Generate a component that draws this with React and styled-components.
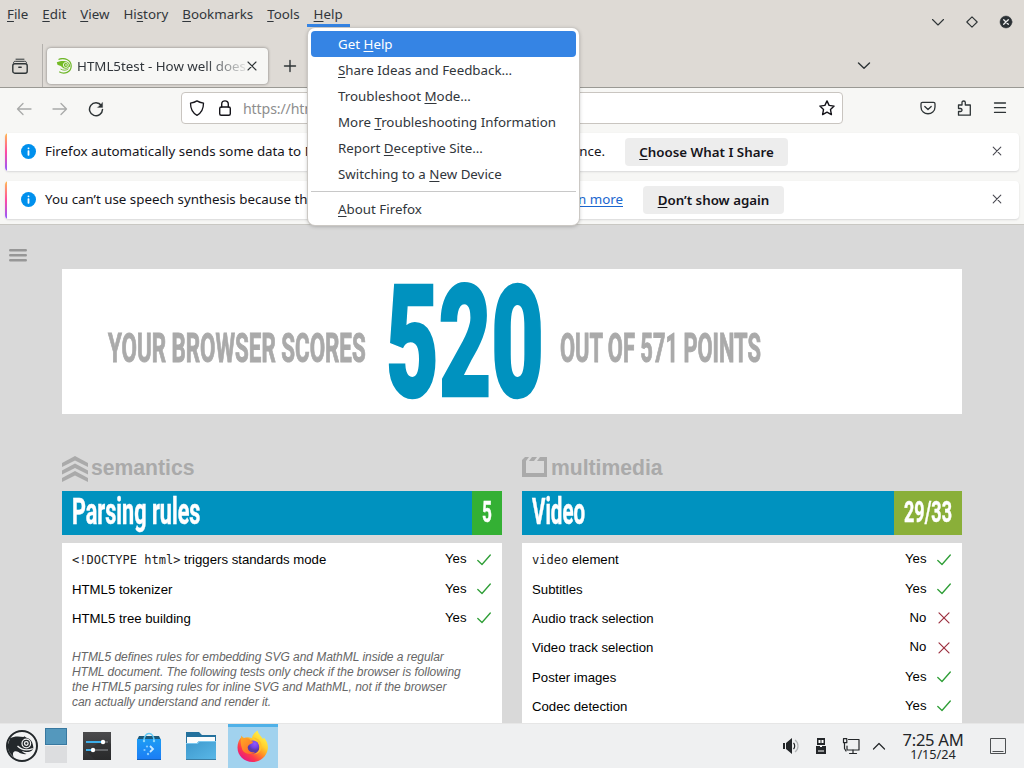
import React from "react";
import styled, { createGlobalStyle, css } from "styled-components";

const Global = createGlobalStyle`
  * { box-sizing: border-box; }
  body { margin: 0; overflow: hidden; font-family: "Noto Sans", sans-serif; }
  svg { display: block; flex: none; }
`;

const Desktop = styled.div`
  width: 1024px;
  height: 768px;
  display: flex;
  flex-direction: column;
  overflow: hidden;
  position: relative;
  background: #d9d9d9;
  font-size: 13.33px;
  color: #31363b;
`;

/* ---------- window chrome ---------- */
const Chrome = styled.header`
  height: 88px;
  flex: none;
  display: flex;
  justify-content: space-between;
  background: #dedad5;
  border-bottom: 1px solid #9a9994;
`;
const ChromeLeft = styled.div`
  display: flex;
  flex-direction: column;
`;
const MenuBar = styled.nav`
  display: flex;
  height: 27px;
`;
const MenuTitle = styled.span`
  padding: 0 7px;
  height: 27px;
  line-height: 28px;
  border-bottom: 3px solid ${(p) => (p.$open ? "#3584e4" : "transparent")};
`;
const Key = styled.span`
  text-decoration: underline;
  text-underline-offset: 2px;
  text-decoration-thickness: 1px;
  text-decoration-skip-ink: none;
`;
const TabStrip = styled.div`
  display: flex;
  align-items: center;
  height: 43px;
  margin-top: 17px;
`;
const ViewButton = styled.div`
  width: 43px;
  height: 43px;
  padding: 0 0 0 12px;
  display: flex;
  align-items: center;
  border-right: 1px solid #b3b0ac;
`;
const Tab = styled.div`
  width: 221px;
  height: 36px;
  margin-left: 4px;
  padding: 0 10px 0 9px;
  display: flex;
  align-items: center;
  background: #f7f7f5;
  border-radius: 4px;
  box-shadow: 0 0 3px rgba(0, 0, 0, 0.45);
`;
const TabTitle = styled.span`
  width: 170px;
  margin-left: 5px;
  overflow: hidden;
  white-space: nowrap;
  mask-image: linear-gradient(to right, #000 128px, transparent 174px);
`;
const NewTab = styled.div`
  margin-left: 15px;
`;
const WindowSide = styled.div`
  width: 170px;
  padding: 14px 10px 0 0;
  display: flex;
  flex-direction: column;
  gap: 27px;
`;
const WindowButtons = styled.div`
  display: flex;
  justify-content: flex-end;
  gap: 18px;
`;

/* ---------- toolbar ---------- */
const Toolbar = styled.div`
  height: 45px;
  flex: none;
  display: flex;
  align-items: flex-start;
  padding: 4px 16px 0;
  background: #f7f7f5;
`;
const NavButtons = styled.div`
  display: flex;
  gap: 20px;
  height: 33px;
  align-items: center;
  width: 165px;
`;
const AddressBar = styled.div`
  width: 662px;
  height: 32px;
  padding: 0 7px;
  display: flex;
  align-items: center;
  gap: 12px;
  background: #fff;
  border: 1px solid #c9c5c0;
  border-radius: 4px;
`;
const Address = styled.span`
  flex: 1;
  margin-left: -2px;
  font-size: 14.2px;
  letter-spacing: -0.15px;
  color: #8e8e8e;
`;
const ToolButtons = styled.div`
  margin-left: auto;
  height: 32px;
  display: flex;
  align-items: center;
  gap: 20px;
`;

/* ---------- notification bars ---------- */
const Notices = styled.div`
  height: 92px;
  flex: none;
  padding: 0 5px;
  display: flex;
  flex-direction: column;
  gap: 10px;
  background: #f7f7f5;
  border-bottom: 1px solid #c9c8c3;
`;
const Notice = styled.div`
  height: 38px;
  display: flex;
  align-items: center;
  background: #fff;
  border-radius: 4px;
  overflow: hidden;
  box-shadow: 0 1px 2px rgba(58, 57, 68, 0.16);
  color: #15141a;
`;
const NoticeAccent = styled.i`
  width: 2px;
  height: 38px;
  margin-right: 14px;
  background: linear-gradient(#ffbd4f, #ff4aa2 50%, #9059ff);
`;
const NoticeText = styled.span`
  width: ${(p) => p.$width}px;
  margin-left: 9px;
  white-space: nowrap;
  display: flex;
  justify-content: space-between;
  line-height: 18px;
  padding-bottom: 3px;
`;
const Link = styled.a`
  color: #1a66cf;
  text-decoration: underline;
  text-underline-offset: 2px;
`;
const NoticeButton = styled.span`
  margin-left: 20px;
  width: ${(p) => p.$width}px;
  height: 28px;
  line-height: 28px;
  border-radius: 4px;
  background: #ededed;
  text-align: center;
  font-weight: 600;
`;
const NoticeClose = styled.span`
  margin: -3px 17px 0 auto;
`;

/* ---------- help menu ---------- */
const Menu = styled.div`
  position: absolute;
  left: 308px;
  top: 28px;
  width: 271px;
  height: 197px;
  padding: 3px;
  background: #fff;
  border-radius: 7px;
  box-shadow: 0 0 0 1px #cbc8c4, 0 1px 4px rgba(0, 0, 0, 0.3);
`;
const MenuItem = styled.div`
  height: 26px;
  line-height: 26px;
  padding-left: 27px;
  border-radius: 4px;
  white-space: nowrap;
  ${(p) =>
    p.$active &&
    css`
      background: #3584e4;
      color: #fff;
    `}
`;
const MenuRule = styled.hr`
  margin: 4px 0;
  border: 0;
  border-top: 1px solid #c8c8c8;
`;

/* ---------- page ---------- */
const Page = styled.main`
  height: 499px;
  flex: none;
  display: flex;
  overflow: hidden;
  font-family: "Liberation Sans", Arial, sans-serif;
  font-size: 13.2px;
  color: #000;
`;
const PageSide = styled.div`
  width: 62px;
  padding: 23px 0 0 9px;
`;
const PageBody = styled.div`
  width: 900px;
  padding-top: 44px;
`;
const ScorePanel = styled.section`
  height: 145px;
  background: #fff;
  display: flex;
  padding-left: 46px;
`;
const Narrow = styled.span`
  display: block;
  width: ${(p) => p.$width}px;
  white-space: nowrap;
  font-family: Roboto, sans-serif;
  font-weight: ${(p) => p.$weight || 700};
  -webkit-text-stroke: ${(p) => p.$stroke || 0.5}px currentColor;
  transform-origin: 0 50%;
  transform: scaleX(${(p) => p.$scale});
`;
const ScoreWords = styled(Narrow)`
  font-size: 41px;
  line-height: 158px;
  color: #aaa;
`;
const ScoreValue = styled(Narrow)`
  font-size: 155px;
  line-height: 149px;
  color: #0092bf;
`;
const Columns = styled.div`
  display: flex;
  gap: 20px;
  margin-top: 41px;
`;
const Column = styled.section`
  width: 440px;
`;
const Category = styled.h2`
  margin: 0;
  height: 36px;
  padding-top: 2px;
  display: flex;
  align-items: flex-start;
  gap: 3px;
  font-size: 21.15px;
  line-height: 21px;
  color: #aaa;
`;
const CategoryIcon = styled.svg`
  margin-top: ${(p) => p.$shift || 0}px;
`;
const GroupHead = styled.div`
  height: 44px;
  display: flex;
  background: #0092bf;
  color: #fff;
`;
const GroupTitle = styled.div`
  flex: 1;
  padding-left: 10px;
  font-size: 36px;
  line-height: 42px;
`;
const GroupScore = styled.div`
  width: ${(p) => p.$width}px;
  padding-left: 10px;
  background: ${(p) => p.$color};
  font-size: 30px;
  line-height: 42px;
`;
const Card = styled.div`
  margin-top: 8px;
  padding: 2px 10px 0;
  height: 200px;
  background: #fff;
`;
const TestRow = styled.div`
  height: 29.33px;
  display: flex;
  align-items: center;
`;
const TestName = styled.span`
  flex: 1;
  padding-top: 0.6px;
`;
const Verdict = styled.span`
  width: 32px;
  margin-top: -1.4px;
`;
const NoLabel = styled.span`
  margin-left: 4.5px;
`;
const Code = styled.code`
  font-family: "DejaVu Sans Mono", monospace;
  font-size: 12px;
  line-height: 12px;
  color: #222;
`;
const Note = styled.p`
  margin: 17px 0 0;
  width: 393px;
  font-size: 12px;
  line-height: 15px;
  letter-spacing: -0.045px;
  font-style: italic;
  color: #666;
`;

/* ---------- taskbar ---------- */
const Taskbar = styled.footer`
  height: 45px;
  margin-top: -1px;
  flex: none;
  display: flex;
  justify-content: space-between;
  background: #eff0f1;
  border-top: 1px solid #e6e6e6;
  position: relative;
`;
const Group = styled.div`
  display: flex;
  height: 44px;
`;
const Launcher = styled.div`
  width: 45px;
  padding: 6px 0 0 6px;
`;
const Pager = styled.div`
  width: 26px;
  padding: 4px 2px 0 0;
  display: flex;
  flex-direction: column;
  gap: 1px;
`;
const PagerDesk = styled.i`
  width: 22px;
  height: 17px;
  background: ${(p) => (p.$current ? "#5498bd" : "#dcdddf")};
  border: 1px solid ${(p) => (p.$current ? "#3878a0" : "#dcdddf")};
`;
const Task = styled.div`
  width: ${(p) => (p.$active ? 50 : 52)}px;
  display: flex;
  align-items: center;
  justify-content: center;
  ${(p) =>
    p.$active &&
    css`
      margin-left: 1px;
      padding: 0 2px 4px 0;
      background: #a1d2ee;
      border-top: 3px solid #4fb1e8;
    `}
`;
const Tray = styled.div`
  display: flex;
  align-items: center;
  width: 242px;
`;
const TrayIcon = styled.div`
  width: ${(p) => p.$width}px;
`;
const Clock = styled.div`
  width: 66px;
  text-align: center;
  white-space: nowrap;
  color: #232629;
`;
const Time = styled.div`
  font-size: 16.6px;
  line-height: 17px;
  letter-spacing: -0.3px;
`;
const DateLine = styled.div`
  font-size: 12.7px;
  line-height: 13px;
`;
const ShowDesktop = styled.div`
  margin-left: 24px;
`;

/* ---------- drawings ---------- */
const Line = ({ w = 16, h = 16, d, color = "#2e3436", sw = 1.5, children }) => (
  <svg width={w} height={h} viewBox={`0 0 ${w} ${h}`} fill="none" stroke={color} strokeWidth={sw} strokeLinecap="round" strokeLinejoin="round">
    {d && <path d={d} />}
    {children}
  </svg>
);

const CloseIcon = ({ color = "#4a4a52" }) => <Line w={10} h={10} sw={1.1} color={color} d="M1.200 1.200l7.600 7.600M8.800 1.200l-7.600 7.600" />;

const InfoIcon = () => (
  <svg width="15" height="16" viewBox="0 0 15 16">
    <circle cx="7.5" cy="7.5" r="7.5" fill="#0090ed" />
    <rect x="6.6" y="3.4" width="1.8" height="1.8" rx=".7" fill="#fff" />
    <rect x="6.6" y="6.3" width="1.8" height="5.4" rx=".7" fill="#fff" />
  </svg>
);

const Favicon = () => (
  <svg width="16" height="16" viewBox="0 0 16 16" fill="none" stroke="#6fb72a">
    <path d="M2.500 1.500C8-1 15.200 2 15.200 8c0 6.200-7 8.800-12 5.800" strokeWidth="1.200" />
    <path d="M.8 4.300C4 3 7 2.900 9.500 3.300c3.200.5 5 2.800 4.600 5.600-1-1-1.500 1.600-4.300 1.800C6 10.900 6.500 8 3.300 7.600L1.500 6.800z" fill="#73ba25" stroke="none" />
    <circle cx="9.800" cy="7" r="2.500" fill="#73ba25" stroke="#f4faee" strokeWidth=".9" />
    <circle cx="10" cy="7" r=".8" fill="#fff" stroke="none" />
    <path d="M4.500 11c3 1.800 6 1.500 8-.3" strokeWidth=".9" />
  </svg>
);

const Chameleon = () => (
  <svg width="32" height="32" viewBox="0 0 32 32">
    <circle cx="16" cy="16" r="15" fill="#f3f4f4" stroke="#23282b" strokeWidth="2" />
    <path d="M4 8.300C8 6 13 6.300 17.500 7l.8-.8 2.200 1.500C25 9 26.800 12 27.300 17c.3 3.600-3 5.200-7 5-1.800-.1-3.300-.6-4.400-1.300 1 1.700 2.600 2.700 4.900 3.400-3.500.3-6.500-.4-8.300-2-2-1.200-4.200-1.200-5.200.4-.6 1.300-.4 3 .4 4.500C4 24 1.500 20 1.800 15z" fill="#23282b" />
    <circle cx="20.300" cy="13.500" r="4.300" fill="#23282b" stroke="#f3f4f4" strokeWidth="1.200" />
    <circle cx="20.300" cy="13.500" r="1.800" fill="none" stroke="#f3f4f4" strokeWidth="1.300" />
    <path d="M11.500 16c4 4 10 4.600 15.300 2.600" fill="none" stroke="#f3f4f4" strokeWidth="1.300" />
  </svg>
);

const SettingsApp = () => (
  <svg width="28" height="28" viewBox="0 0 28 28">
    <defs><linearGradient id="st" y2="1" x2="0"><stop stopColor="#4b4b4d" /><stop offset="1" stopColor="#2e2f31" /></linearGradient></defs>
    <rect width="28" height="28" fill="url(#st)" />
    <path d="M3 19l9 9h16V12l-3-3-5-1z" fill="#222" opacity=".35" />
    <path d="M3 10h17M3 18h7" stroke="#3daee9" strokeWidth="2" />
    <path d="M22 10h3M12 18h13" stroke="#626467" strokeWidth="2" />
    <circle cx="20" cy="10" r="2.200" fill="#fff" /><circle cx="10" cy="18" r="2.200" fill="#fff" />
  </svg>
);

const StoreApp = () => (
  <svg width="26" height="28" viewBox="0 0 26 28">
    <defs><linearGradient id="sb" x2="0" y2="1"><stop stopColor="#1d9cf4" /><stop offset="1" stopColor="#1b7df5" /></linearGradient></defs>
    <path d="M3 4h20l2 4H1z" fill="#1d5979" />
    <rect x="1" y="7" width="24" height="20" fill="url(#sb)" />
    <path d="M1 27h24v1H1z" fill="#1462bd" />
    <path d="M8 9C8-1 18-1 18 9" fill="none" stroke="#60c8f5" strokeWidth="1.600" />
    <circle cx="8" cy="9" r="1.200" fill="#8ed7fa" /><circle cx="18" cy="9" r="1.200" fill="#8ed7fa" />
    <path d="M14 14l3 3-3 3" fill="none" stroke="#c8e9ff" strokeWidth="1.800" />
    <circle cx="11" cy="14.500" r="1.100" fill="#8accff" /><circle cx="8.500" cy="18" r="1.100" fill="#8accff" /><circle cx="12" cy="22" r="1.200" fill="#8accff" />
  </svg>
);

const FilesApp = () => (
  <svg width="30" height="28" viewBox="0 0 30 28">
    <defs><linearGradient id="fd" x2="1" y2="1"><stop stopColor="#3d98cc" /><stop offset="1" stopColor="#5ab8e8" /></linearGradient></defs>
    <path d="M0 0h13l3 3h14v12H0z" fill="#24719d" />
    <path d="M1 5h28v8H1z" fill="#fcfcfc" />
    <path d="M0 11h11l2-2h17v19H0z" fill="url(#fd)" />
    <path d="M0 11h11l2-2h17v1H13.500l-2 2H0z" fill="#7cc7ee" />
    <path d="M0 27h30v1H0z" fill="#3b7da3" />
  </svg>
);

const FirefoxApp = () => (
  <svg width="31" height="32" viewBox="0 0 31 32">
    <defs>
      <linearGradient id="fx" x1=".85" y1=".1" x2=".2" y2=".95">
        <stop stopColor="#fff44f" /><stop offset=".3" stopColor="#ffd02c" /><stop offset=".5" stopColor="#ff9425" /><stop offset=".75" stopColor="#ff3b4a" /><stop offset="1" stopColor="#e31587" />
      </linearGradient>
      <radialGradient id="fp" cx=".65" cy=".25"><stop stopColor="#9059ff" /><stop offset=".6" stopColor="#7542e5" /><stop offset="1" stopColor="#5b3aa8" /></radialGradient>
      <linearGradient id="fo" x2=".7" y2="1"><stop stopColor="#ffae22" /><stop offset="1" stopColor="#ff6b2c" /></linearGradient>
    </defs>
    <path d="M20.500 .5c.8 4 4 6 5.500 8.800l1-1.800c3 4 4.300 7 3.800 11.500C29.500 27 23 32 15.500 32 7 32 .5 25.500.5 17.500.5 13 2 10 4 7.500V11l3-3c2-1 5-1 8 0 .5-3 2.500-5.500 5.500-7.500z" fill="url(#fx)" />
    <circle cx="15.800" cy="17" r="6.600" fill="url(#fp)" />
    <path d="M4.500 5.500c.8 1.800 2 2.700 3.700 2.500 2.500-.4 4 .5 4.500 1.500.5 1.500 2 2 3.500 2-.3 2-2.500 2.300-3.700 3.100-1.200.8-1.800 1.800-1.800 3.400.5 2.800 3.300 5.200 7.300 4-2.500 3-9 2.500-12-1C4 17 3 10.500 4.500 5.500z" fill="url(#fo)" />
    <path d="M16 7.500c6.500.5 9.500 6 8.500 10.500-.8 3.800-3.500 6-7.500 6.500 4.500-2 6.500-5 5-9.700-1-3-3-5.300-6-7.300z" fill="#ffc02b" opacity=".9" />
  </svg>
);

const Mark = ({ ok }) =>
  ok ? (
    <Line w={15} h={14} sw={1.300} color="#2e9e36" d="M.8 7.500l4.200 4L13.300 2" />
  ) : (
    <Line w={15} h={14} sw={1.200} color="#9c2f3e" d="M2 1.800l10 10M12 1.800L2 11.800" />
  );

const Test = ({ ok, children }) => (
  <TestRow>
    <TestName>{children}</TestName>
    <Verdict>{ok ? "Yes" : <NoLabel>No</NoLabel>}</Verdict>
    <Mark ok={ok} />
  </TestRow>
);

const menus = [["", "F", "ile"], ["", "E", "dit"], ["", "V", "iew"], ["Hi", "s", "tory"], ["", "B", "ookmarks"], ["", "T", "ools"], ["", "H", "elp"]];
const helpItems = [["Get ", "H", "elp"], ["", "S", "hare Ideas and Feedback…"], ["Troubleshoot ", "M", "ode…"], ["More ", "T", "roubleshooting Information"], ["Report ", "D", "eceptive Site…"], ["Switching to a ", "N", "ew Device"]];

const Label = ({ parts }) => (
  <>{parts[0]}<Key>{parts[1]}</Key>{parts[2]}</>
);

export default function App() {
  return (
    <Desktop>
      <Global />
      <Chrome>
        <ChromeLeft>
          <MenuBar>
            {menus.map((m, i) => <MenuTitle key={i} $open={i === 6}><Label parts={m} /></MenuTitle>)}
          </MenuBar>
          <TabStrip>
            <ViewButton>
              <Line sw={1.400}><path d="M4 1.200h8" strokeWidth="1" /><path d="M1.500 5C1.500 3.600 2.300 3.300 3.300 3.300h9.400c1 0 1.800.4 1.800 1.700" strokeWidth="1" /><rect x=".8" y="5.800" width="14.400" height="9.400" rx="2" /><path d="M6.800 9.300h2.400" /></Line>
            </ViewButton>
            <Tab>
              <Favicon />
              <TabTitle>HTML5test - How well does</TabTitle>
              <Line w={10} h={10} sw={1.100} d="M1 1l8 8M9 1l-8 8" />
            </Tab>
            <NewTab><Line w={14} h={14} sw={1.400} d="M7 1.500v11M1.500 7h11" /></NewTab>
          </TabStrip>
        </ChromeLeft>
        <WindowSide>
          <WindowButtons>
            <Line sw={1.100} d="M2.500 5.500L8 11l5.500-5.500" />
            <Line sw={1.100} d="M8 2.800L13.200 8 8 13.200 2.800 8z" />
            <Line color="#eee" sw={1.300}><circle cx="8" cy="8" r="6" fill="#2b3135" stroke="#2b3135" strokeWidth=".5" /><path d="M5.700 5.700l4.600 4.600M10.300 5.700l-4.600 4.600" /></Line>
          </WindowButtons>
          <Line w={20} h={16} sw={1.400} d="M4.500 6L10 11.300 15.500 6" />
        </WindowSide>
      </Chrome>

      <Toolbar>
        <NavButtons>
          <Line color="#a9aaa9" sw={1.300} d="M15 8H1.500M7 2.500L1.500 8 7 13.500" />
          <Line color="#a9aaa9" sw={1.300} d="M1 8h13.500M9 2.500L14.500 8 9 13.500" />
          <Line sw={1.500}><path d="M13.300 4.500A6.500 6.500 0 1 0 14.500 8.500" /><path d="M14.600 1.500v5h-5z" fill="#2e3436" strokeWidth=".3" /></Line>
        </NavButtons>
        <AddressBar>
          <Line color="#15141a" d="M8 .9c2.300 1.500 4.300 1.900 6.500 2.200 0 5.500-1 9.500-6.500 12.200C2.500 12.600 1.500 8.600 1.500 3.100 3.700 2.800 5.700 2.400 8 .9z" sw={1.300} />
          <Line color="#15141a" sw={1.400}><rect x="2.700" y="7" width="10.600" height="8.300" rx="1.500" /><path d="M4.700 7V4c0-4.200 6.600-4.200 6.600 0v3" /></Line>
          <Address>https://html5test.opensuse.org</Address>
          <Line color="#15141a" sw={1.400} d="M8 .9l2.100 4.500 5 .7-3.600 3.500.9 5L8 12.200l-4.400 2.400.9-5L.9 6.100l5-.7z" />
        </AddressBar>
        <ToolButtons>
          <Line sw={1.300}><path d="M2.500 2.300h11c.9 0 1.500.6 1.500 1.400V7c0 9-14 9-14 0V3.700c0-.8.600-1.400 1.500-1.400z" /><path d="M4.800 6.500L8 9.500l3.200-3" /></Line>
          <Line sw={1.300} d="M2.500 5H6V2.500c0-2 3.300-2 3.300 0V5h5v10.200H2.500v-3.700h2c2 0 2-3 0-3h-2z" />
          <Line sw={1.300} d="M2.500 3h11M2.500 7.700h11M2.500 12.400h11" />
        </ToolButtons>
      </Toolbar>

      <Notices>
        <Notice>
          <NoticeAccent />
          <InfoIcon />
          <NoticeText $width={560}>Firefox automatically sends some data to Mozilla so that we can improve your experience.</NoticeText>
          <NoticeButton $width={163}><Key>C</Key>hoose What I Share</NoticeButton>
          <NoticeClose><CloseIcon /></NoticeClose>
        </Notice>
        <Notice>
          <NoticeAccent />
          <InfoIcon />
          <NoticeText $width={578}><span>You can’t use speech synthesis because the speech library is missing.</span><Link>Learn more</Link></NoticeText>
          <NoticeButton $width={141}><Key>D</Key>on’t show again</NoticeButton>
          <NoticeClose><CloseIcon /></NoticeClose>
        </Notice>
      </Notices>

      <Page>
        <PageSide>
          <Line w={18} h={14} color="#979797" sw={2.400} d="M1.200 2.200h15.600M1.200 7.200h15.600M1.200 12.200h15.600" />
        </PageSide>
        <PageBody>
          <ScorePanel>
            <ScoreWords $width={278} $scale={0.545} $stroke={1}>YOUR BROWSER SCORES</ScoreWords>
            <ScoreValue $width={174} $scale={0.586} $weight={900} $stroke={2.5}>520</ScoreValue>
            <ScoreWords $width={210} $scale={0.533} $stroke={1}>OUT OF 571 POINTS</ScoreWords>
          </ScorePanel>
          <Columns>
            <Column>
              <Category>
                <CategoryIcon $shift={-1} width="26" height="26" viewBox="0 0 26 26" fill="#aaa">
                  <path d="M0 7L13 0l13 7v4L13 4.500 0 11zM0 14.500L13 7.500l13 7v4L13 12 0 18.500zM0 22l13-7 13 7v4l-13-6.500L0 26z" />
                </CategoryIcon>
                semantics
              </Category>
              <GroupHead>
                <GroupTitle><Narrow $width={130} $scale={0.6}>Parsing rules</Narrow></GroupTitle>
                <GroupScore $width={30} $color="#34b034"><Narrow $width={10} $scale={0.57}>5</Narrow></GroupScore>
              </GroupHead>
              <Card>
                <Test ok><Code>&lt;!DOCTYPE html&gt;</Code> triggers standards mode</Test>
                <Test ok>HTML5 tokenizer</Test>
                <Test ok>HTML5 tree building</Test>
                <Note>
                  HTML5 defines rules for embedding SVG and MathML inside a regular HTML document. The following tests only check if the browser is following the HTML5 parsing rules for inline SVG and MathML, not if the browser can actually understand and render it.
                </Note>
              </Card>
            </Column>
            <Column>
              <Category>
                <CategoryIcon width="26" height="20" viewBox="0 0 26 20" fill="#aaa">
                  <path d="M0 3l3-3h4L4 4v12h18V5h3v15H0zM10 0h5l-3 4H7zM18 0h7v5h-3V4h-7z" />
                </CategoryIcon>
                multimedia
              </Category>
              <GroupHead>
                <GroupTitle><Narrow $width={60} $scale={0.57}>Video</Narrow></GroupTitle>
                <GroupScore $width={68} $color="#8aaf39"><Narrow $width={48} $scale={0.6}>29/33</Narrow></GroupScore>
              </GroupHead>
              <Card>
                <Test ok><Code>video</Code> element</Test>
                <Test ok>Subtitles</Test>
                <Test>Audio track selection</Test>
                <Test>Video track selection</Test>
                <Test ok>Poster images</Test>
                <Test ok>Codec detection</Test>
              </Card>
            </Column>
          </Columns>
        </PageBody>
      </Page>

      <Taskbar>
        <Group>
          <Launcher><Chameleon /></Launcher>
          <Pager><PagerDesk $current /><PagerDesk /></Pager>
          <Task><SettingsApp /></Task>
          <Task><StoreApp /></Task>
          <Task><FilesApp /></Task>
          <Task $active><FirefoxApp /></Task>
        </Group>
        <Tray>
          <TrayIcon $width={31}>
            <svg width="18" height="18" viewBox="0 0 18 18" fill="#232629">
              <path d="M1 6h2v6H1zM4 6l6-5v16l-6-5z" />
              <path d="M11.500 6c1.600 1.500 1.600 4.500 0 6" fill="none" stroke="#232629" strokeWidth="1.200" />
              <path d="M13 3c4 3 4 9 0 12" fill="none" stroke="#b4b6b8" strokeWidth="1.200" />
            </svg>
          </TrayIcon>
          <TrayIcon $width={29}>
            <svg width="16" height="18" viewBox="0 0 16 18" fill="#232629">
              <path d="M4 1h8v7H4zM3 9h10v8H3z" />
              <path d="M5.500 3h2v3h-2zM8.500 3h2v3h-2zM5 13.500h6v1H5zM7 9h2v1H7z" fill="#fff" />
            </svg>
          </TrayIcon>
          <TrayIcon $width={29}>
            <Line w={18} h={18} color="#232629" sw={1.200}><path d="M6.500 2.500H17v10.500H5V9" /><path d="M1.500 1.700h3.300v4H1.500zM2.500 6v5.500l1.500 2.500M11 13v3M7.500 16.500h7" /></Line>
          </TrayIcon>
          <TrayIcon $width={29}>
            <Line w={16} h={16} color="#232629" sw={1.200} d="M2.500 11L8 5.500 13.500 11" />
          </TrayIcon>
          <Clock><Time>7:25 AM</Time><DateLine>1/15/24</DateLine></Clock>
          <ShowDesktop><Line w={16} h={16} color="#4d5052" sw={1}><path d="M.5.5h15v15H.5zM2.500 13.500h11" strokeLinecap="butt" /></Line></ShowDesktop>
        </Tray>
      </Taskbar>

      <Menu>
        {helpItems.map((m, i) => <MenuItem key={i} $active={i === 0}><Label parts={m} /></MenuItem>)}
        <MenuRule />
        <MenuItem><Key>A</Key>bout Firefox</MenuItem>
      </Menu>
    </Desktop>
  );
}
